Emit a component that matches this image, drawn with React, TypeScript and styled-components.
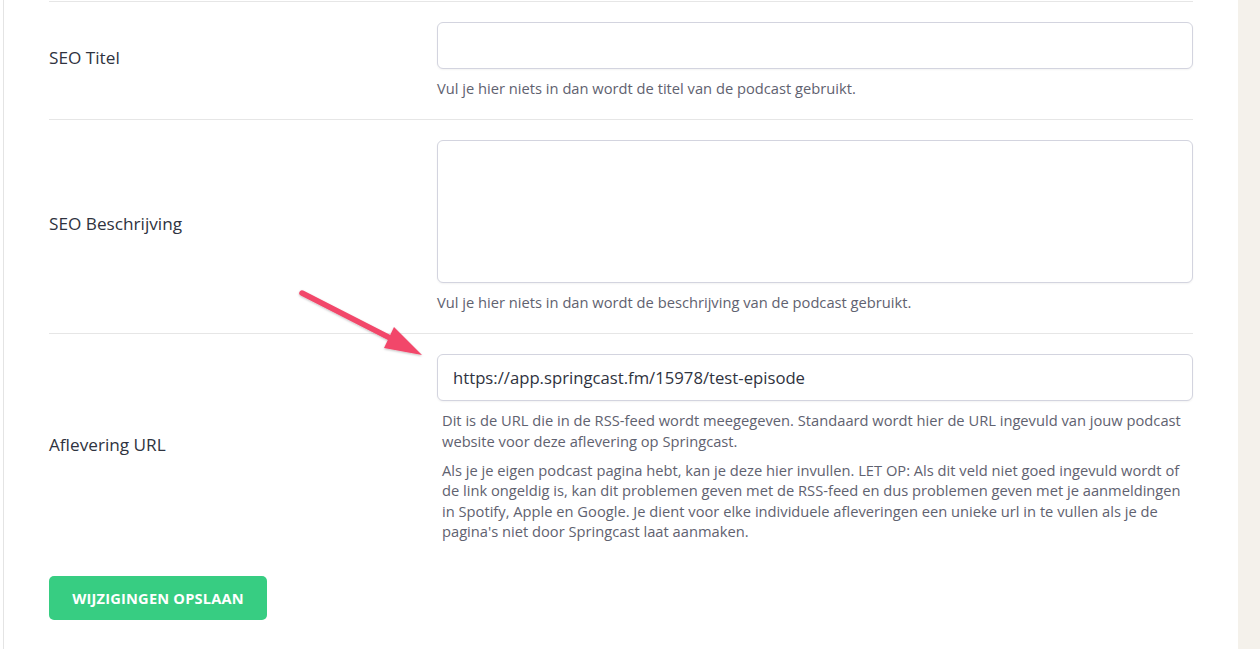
import React from "react";
import styled, { createGlobalStyle } from "styled-components";

const Global = createGlobalStyle`
  html, body { margin: 0; padding: 0; background: #ffffff; }
  body { font-family: "Open Sans", "Noto Sans", "Liberation Sans", sans-serif; }
  * { box-sizing: border-box; }
`;

const Page = styled.div`
  display: flex;
  height: 649px;
  overflow: hidden;
  background: #ffffff;
`;

const Card = styled.main`
  position: relative;
  flex: 1;
  margin-left: 3px;
  border-left: 1px solid #e4e4e4;
  background: #ffffff;
  padding: 1px 44px 0 45px;
`;

const Side = styled.aside`
  width: 22px;
  background: #f4f1eb;
`;

const Form = styled.form`
  display: flex;
  flex-direction: column;
  width: 1144px;
`;

const Row = styled.div<{ $last?: boolean }>`
  display: grid;
  grid-template-columns: 388px 756px;
  align-items: center;
  border-top: 1px solid #e6e6e6;
  padding: 20px 0 ${(p) => (p.$last ? "0" : "20.4px")};
`;

const Label = styled.label`
  font-size: 17.2px;
  color: #2f3340;
  margin-top: -6px;
`;

const Field = styled.div`
  display: flex;
  flex-direction: column;
`;

const Input = styled.input`
  height: 47px;
  width: 100%;
  border: 1px solid #d3d4df;
  border-radius: 6px;
  box-shadow: 0 1px 2px rgba(0, 0, 0, 0.05);
  padding: 0 15px;
  font-family: inherit;
  font-size: 16.7px;
  color: #2f3340;
  outline: none;
  background: #fff;
`;

const TextArea = styled.textarea`
  height: 143px;
  width: 100%;
  border: 1px solid #d3d4df;
  border-radius: 6px;
  box-shadow: 0 1px 2px rgba(0, 0, 0, 0.05);
  padding: 10px 15px;
  font-family: inherit;
  font-size: 16px;
  resize: none;
  outline: none;
  background: #fff;
`;

const Help = styled.p<{ $indent?: boolean }>`
  margin: 9.4px 0 0;
  padding-left: ${(p) => (p.$indent ? "5px" : "0")};
  font-size: 14.7px;
  line-height: 20.2px;
  color: #5f6270;
`;

const Button = styled.button`
  margin-top: 35px;
  align-self: flex-start;
  width: 218px;
  height: 44px;
  border: none;
  border-radius: 5px;
  background: #37cd82;
  color: #ffffff;
  font-family: inherit;
  font-weight: 700;
  font-size: 14.6px;
  letter-spacing: 0.2px;
  text-transform: uppercase;
`;

const Arrow = styled.svg`
  position: absolute;
  left: 290px;
  top: 285px;
  width: 140px;
  height: 80px;
  overflow: visible;
`;

export default function App() {
  return (
    <>
      <Global />
      <Page>
        <Card>
          <Form onSubmit={(e) => e.preventDefault()}>
            <Row>
              <Label>SEO Titel</Label>
              <Field>
                <Input type="text" />
                <Help>Vul je hier niets in dan wordt de titel van de podcast gebruikt.</Help>
              </Field>
            </Row>
            <Row>
              <Label>SEO Beschrijving</Label>
              <Field>
                <TextArea />
                <Help>Vul je hier niets in dan wordt de beschrijving van de podcast gebruikt.</Help>
              </Field>
            </Row>
            <Row $last>
              <Label>Aflevering URL</Label>
              <Field>
                <Input type="text" defaultValue="https://app.springcast.fm/15978/test-episode" />
                <Help $indent>
                  Dit is de URL die in de RSS-feed wordt meegegeven. Standaard wordt hier de URL ingevuld van jouw podcast website voor deze aflevering op Springcast.
                </Help>
                <Help $indent>
                  Als je je eigen podcast pagina hebt, kan je deze hier invullen. LET OP: Als dit veld niet goed ingevuld wordt of de link ongeldig is, kan dit problemen geven met de RSS-feed en dus problemen geven met je aanmeldingen in Spotify, Apple en Google. Je dient voor elke individuele afleveringen een unieke url in te vullen als je de pagina's niet door Springcast laat aanmaken.
                </Help>
              </Field>
            </Row>
            <Button type="submit">Wijzigingen opslaan</Button>
          </Form>
          <Arrow viewBox="0 0 140 80">
            <defs>
              <filter id="sh" x="-20%" y="-20%" width="140%" height="140%">
                <feDropShadow dx="0" dy="1" stdDeviation="1" floodColor="#000" floodOpacity="0.25" />
              </filter>
            </defs>
            <g filter="url(#sh)">
              <line x1="8" y1="8" x2="100" y2="55" stroke="#f2476a" strokeWidth="5.5" strokeLinecap="round" />
              <polygon points="128,70 90,63 100,42" fill="#f2476a" />
            </g>
          </Arrow>
        </Card>
        <Side />
      </Page>
    </>
  );
}
